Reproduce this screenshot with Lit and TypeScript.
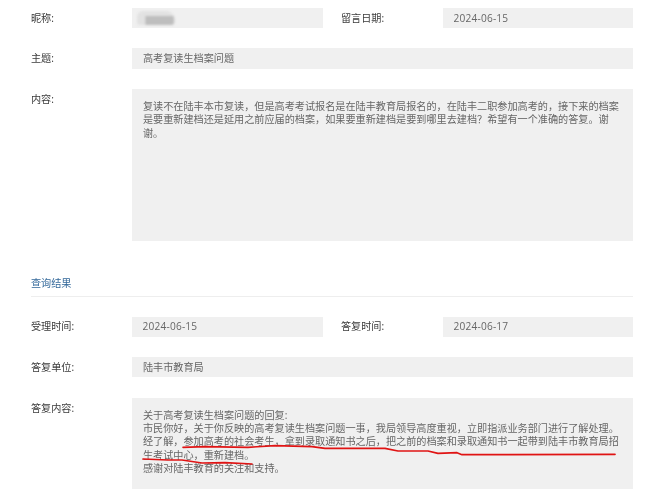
import { LitElement, html, css } from "lit";
import { customElement } from "lit/decorators.js";

@customElement("app-root")
export class AppRoot extends LitElement {
  static styles = css`
    :host {
      display: block;
      position: relative;
      width: 650px;
      height: 489px;
      overflow: hidden;
      background: #fff;
      font-family: "Open Sans", "Noto Sans CJK SC", sans-serif;
      font-size: 10.13px;
      line-height: 13.3px;
      color: #666;
    }
    .page {
      display: flex;
      flex-direction: column;
      gap: 20.2px;
      padding: 8px 17px 0 31px;
      filter: blur(0.4px);
    }
    .row {
      display: flex;
      align-items: flex-start;
    }
    .label {
      flex: none;
      width: 101px;
      height: 20.3px;
      display: flex;
      align-items: center;
      color: #3a3a3a;
    }
    .label.top {
      height: auto;
      padding-top: 4px;
    }
    .label.second {
      width: 102px;
      margin-left: 18px;
    }
    .value {
      flex: 1;
      min-width: 0;
      height: 20.3px;
      display: flex;
      align-items: center;
      padding: 0 11px;
      background: #f0f0f0;
      box-sizing: border-box;
    }
    .date {
      letter-spacing: 0.2px;
      padding-left: 10.5px;
    }
    .half {
      flex: none;
      width: 191px;
    }
    .half.right {
      width: 190px;
    }
    .body {
      display: block;
      height: 152px;
      padding: 11px 12px 0 11px;
    }
    .answer {
      height: 100px;
    }
    .title {
      margin-top: 16px;
      margin-bottom: -1px;
      padding-bottom: 6px;
      border-bottom: 1px solid #eee;
      color: #33689a;
    }
    .mask {
      width: 38px;
      height: 14px;
      margin-left: -6px;
      border-radius: 6px 9px 4px 3px;
      background: linear-gradient(90deg, transparent 0 20%, #bebebe 24% 94%, transparent 100%) 0 100% / 100% 66% no-repeat, #e2e2e2;
      filter: blur(1px);
    }
    .ink {
      position: absolute;
      left: 0;
      top: 0;
      pointer-events: none;
      filter: blur(0.3px);
    }
    .ink path {
      fill: none;
      stroke: #e01414;
      stroke-width: 1.7;
      stroke-linejoin: round;
      stroke-linecap: round;
    }
  `;

  render() {
    return html`
      <div class="page">
        <div class="row">
          <div class="label">昵称:</div>
          <div class="value half"><div class="mask"></div></div>
          <div class="label second">留言日期:</div>
          <div class="value half right date">2024-06-15</div>
        </div>
        <div class="row">
          <div class="label">主题:</div>
          <div class="value">高考复读生档案问题</div>
        </div>
        <div class="row">
          <div class="label top">内容:</div>
          <div class="value body">复读不在陆丰本市复读，但是高考考试报名是在陆丰教育局报名的，在陆丰二职参加高考的，接下来的档案是要重新建档还是延用之前应届的档案，如果要重新建档是要到哪里去建档？希望有一个准确的答复。谢谢。</div>
        </div>
        <div class="title">查询结果</div>
        <div class="row">
          <div class="label">受理时间:</div>
          <div class="value half date">2024-06-15</div>
          <div class="label second">答复时间:</div>
          <div class="value half right date">2024-06-17</div>
        </div>
        <div class="row">
          <div class="label">答复单位:</div>
          <div class="value">陆丰市教育局</div>
        </div>
        <div class="row">
          <div class="label top">答复内容:</div>
          <div class="value body answer">关于高考复读生档案问题的回复:<br />市民你好，关于你反映的高考复读生档案问题一事，我局领导高度重视，立即指派业务部门进行了解处理。经了解，参加高考的社会考生，拿到录取通知书之后，把之前的档案和录取通知书一起带到陆丰市教育局招生考试中心，重新建档。<br />感谢对陆丰教育的关注和支持。</div>
        </div>
      </div>
      <svg class="ink" width="650" height="489" viewBox="0 0 650 489">
        <path d="M183 447.3 L205 446.7 L248 447.3 L275 445.7 L312 446.7 L325 448.3 L385 448.3 L398 451 L428 451 L438 453.3 L457 452.7 L462 454.7 L615 454.3"></path>
        <path d="M143 459 L168 460 L182 460 L202 463 L225 462.7 L252 464"></path>
      </svg>
    `;
  }
}
